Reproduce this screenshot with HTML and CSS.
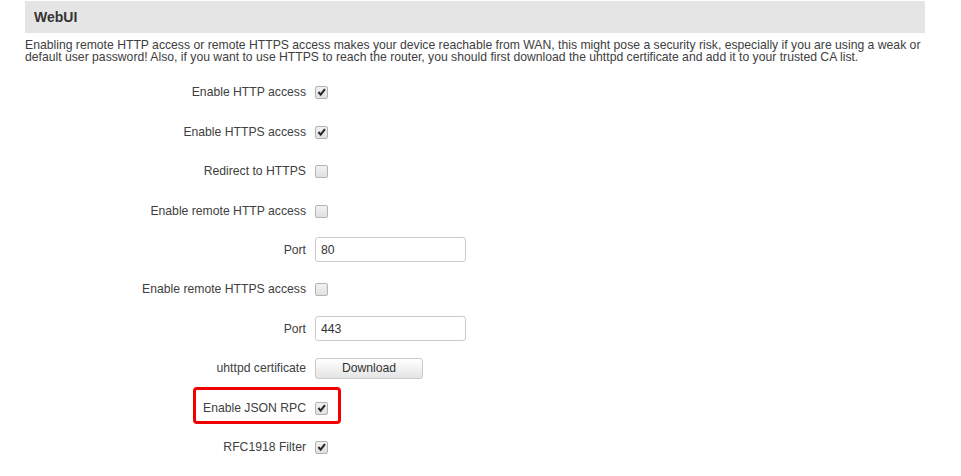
FILE: index.html
```html
<!DOCTYPE html>
<html>
<head>
<meta charset="utf-8">
<link rel="stylesheet" href="styles.css">
</head>
<body>
<div class="page">
  <div class="header">WebUI</div>
  <p class="desc">Enabling remote HTTP access or remote HTTPS access makes your device reachable from WAN, this might pose a security risk, especially if you are using a weak or<br>default user password! Also, if you want to use HTTPS to reach the router, you should first download the uhttpd certificate and add it to your trusted CA list.</p>
  <div class="form">
    <div class="row"><label class="lbl">Enable HTTP access</label><span class="cb checked"><svg viewBox="0 0 13 13" width="13" height="13"><path d="M2.6 6.7 L4.2 5.2 L5.6 7 L9.1 2.4 L10.8 3.7 L5.7 10.2 Z" fill="#2a2a2a"/></svg></span></div>
    <div class="row"><label class="lbl">Enable HTTPS access</label><span class="cb checked"><svg viewBox="0 0 13 13" width="13" height="13"><path d="M2.6 6.7 L4.2 5.2 L5.6 7 L9.1 2.4 L10.8 3.7 L5.7 10.2 Z" fill="#2a2a2a"/></svg></span></div>
    <div class="row"><label class="lbl">Redirect to HTTPS</label><span class="cb"></span></div>
    <div class="row"><label class="lbl">Enable remote HTTP access</label><span class="cb"></span></div>
    <div class="row"><label class="lbl">Port</label><input class="txt" type="text" value="80"></div>
    <div class="row"><label class="lbl">Enable remote HTTPS access</label><span class="cb"></span></div>
    <div class="row"><label class="lbl">Port</label><input class="txt" type="text" value="443"></div>
    <div class="row"><label class="lbl">uhttpd certificate</label><button class="btn">Download</button></div>
    <div class="row"><span class="mark"></span><label class="lbl">Enable JSON RPC</label><span class="cb checked"><svg viewBox="0 0 13 13" width="13" height="13"><path d="M2.6 6.7 L4.2 5.2 L5.6 7 L9.1 2.4 L10.8 3.7 L5.7 10.2 Z" fill="#2a2a2a"/></svg></span></div>
    <div class="row"><label class="lbl">RFC1918 Filter</label><span class="cb checked"><svg viewBox="0 0 13 13" width="13" height="13"><path d="M2.6 6.7 L4.2 5.2 L5.6 7 L9.1 2.4 L10.8 3.7 L5.7 10.2 Z" fill="#2a2a2a"/></svg></span></div>
  </div>
</div>
</body>
</html>
```
FILE: styles.css
```css
html, body {
  margin: 0;
  padding: 0;
  background: #fff;
}
body {
  font-family: "Liberation Sans", Arial, sans-serif;
  font-size: 12.2px;
  color: #404040;
}
.page {
  width: 900px;
  padding: 1px 0 0 25px;
}
.header {
  height: 32px;
  line-height: 32px;
  background: #e5e5e5;
  padding-left: 9px;
  font-weight: bold;
  font-size: 14px;
  color: #333;
}
.desc {
  margin: 5.5px 0 0 0;
  line-height: 12.5px;
  white-space: nowrap;
}
.form {
  margin-top: 9px;
  display: flex;
  flex-direction: column;
}
.row {
  position: relative;
  display: flex;
  align-items: center;
  height: 39.44px;
  gap: 9px;
}
.lbl {
  width: 281px;
  text-align: right;
  flex: none;
}
.cb {
  box-sizing: border-box;
  width: 13px;
  height: 13px;
  margin-top: 1px;
  border: 1px solid #b3b3b3;
  border-radius: 2px;
  background: linear-gradient(#f2f2f2, #e0e0e0);
  position: relative;
  display: block;
}
.cb svg {
  position: absolute;
  left: -1px;
  top: -1px;
}
.txt {
  box-sizing: border-box;
  width: 151px;
  height: 25px;
  border: 1px solid #cccccc;
  border-radius: 3px;
  padding: 0 5px;
  margin: 0;
  font-family: "Liberation Sans", Arial, sans-serif;
  font-size: 12.2px;
  color: #333;
  background: #fff;
  outline: none;
}
.btn {
  box-sizing: border-box;
  width: 108px;
  height: 21px;
  margin: 0;
  border: 1px solid #c8c8c8;
  border-radius: 3px;
  background: linear-gradient(#ffffff, #e4e4e4);
  font-family: "Liberation Sans", Arial, sans-serif;
  font-size: 12.2px;
  color: #333;
  padding: 0;
}
.mark {
  position: absolute;
  left: 168px;
  top: -1px;
  width: 148px;
  height: 37px;
  box-sizing: border-box;
  border: 3px solid #f20000;
  border-radius: 4px;
}
```
